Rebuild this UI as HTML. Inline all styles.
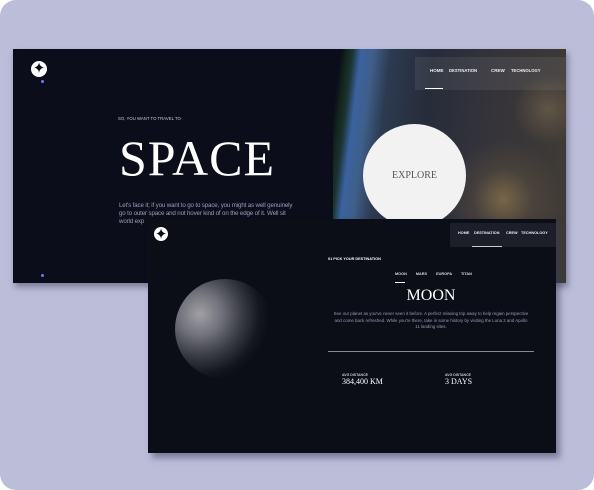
<!DOCTYPE html>
<html><head><style>
*{margin:0;padding:0;box-sizing:border-box}
body{width:594px;height:490px;background:#fff;overflow:hidden;font-family:"Liberation Sans",sans-serif}
.bg{position:absolute;left:0;top:0;width:594px;height:490px;background:#bcbdd9;border-radius:16px}
.s1{position:absolute;left:13px;top:49px;width:553px;height:234px;background:#0b0d1a;overflow:hidden;box-shadow:2px 4px 6px rgba(60,60,90,.5)}
.earth{position:absolute;left:320px;top:0;width:240px;height:234px;
background:
radial-gradient(circle at 170px 150px,rgba(200,160,90,.45) 0,rgba(120,100,70,.25) 30px,transparent 60px),
radial-gradient(circle at 215px 60px,rgba(180,150,100,.3) 0,transparent 35px),
radial-gradient(circle at 120px 200px,rgba(190,150,90,.3) 0,transparent 30px),
linear-gradient(97deg,transparent 0,transparent 8px,#13261c 14px,#1c3432 20px,#3a62a0 28px,#3f5f8a 40px,#2c3a50 58px,#262c3a 100px,#34333a 160px,#3e3a36 240px);}
.nav1{position:absolute;left:402px;top:8px;width:151px;height:33px;background:rgba(255,255,255,.07)}
.nav1 span,.nav2 span{position:absolute;color:#eee;font-size:4.5px;font-weight:bold;white-space:nowrap}
.s2{position:absolute;left:148px;top:219px;width:408px;height:234px;background:#0b0d17;overflow:hidden;box-shadow:4px 5px 6px rgba(60,60,90,.5)}
.nav2{position:absolute;left:302px;top:4px;width:106px;height:24px;background:#1c1f29}
.moon{position:absolute;left:27px;top:60px;width:100px;height:100px;border-radius:50%;
background:radial-gradient(circle at 25% 35%,#a0a0a4 0%,#70717a 22%,#3a3c46 42%,#15171f 60%,#0b0d17 70%)}
.logo{position:absolute;width:16px;height:16px;border-radius:50%;background:#fff}
.logo:after{content:"✦";position:absolute;left:0;top:-2px;width:100%;text-align:center;font-size:15px;color:#0b0d17}
</style></head><body>
<div class="bg"></div>
<div class="s1">
 <div class="earth"></div>
 <div class="logo" style="left:18px;top:12px"></div>
 <div style="position:absolute;left:28px;top:31px;width:3px;height:3px;background:#6d7cf0;border-radius:50%"></div>
 <div style="position:absolute;left:28px;top:225px;width:3px;height:3px;background:#6d7cf0;border-radius:50%"></div>
 <div class="nav1"><span style="left:15px;top:11px">HOME</span><span style="left:34px;top:11px;font-size:4.2px">DESTINATION</span><span style="left:76px;top:11px">CREW</span><span style="left:96px;top:11px;font-size:4.2px">TECHNOLOGY</span><div style="position:absolute;left:10px;top:31px;width:18px;height:1px;background:#fff"></div></div>
 <div style="position:absolute;left:105px;top:67px;color:#c8c9e0;font-size:4.3px">SO, YOU WANT TO TRAVEL TO</div>
 <div style="position:absolute;left:106px;top:80px;color:#fff;font-family:'Liberation Serif',serif;font-size:50px;letter-spacing:1px">SPACE</div>
 <div style="position:absolute;left:106px;top:153px;width:178px;color:#9a9cb8;font-size:6.2px;line-height:8px;letter-spacing:-.15px">Let's face it; if you want to go to space, you might as well genuinely go to outer space and not hover kind of on the edge of it. Well sit<br>world exp</div>
 <div style="position:absolute;left:350px;top:75px;width:103px;height:103px;border-radius:50%;background:#f2f2f2;color:#555;font-family:'Liberation Serif',serif;font-size:10px;line-height:103px;text-align:center">EXPLORE</div>
</div>
<div class="s2">
 <div class="moon"></div>
 <div class="nav2"><span style="left:8px;top:8px;font-size:3.8px">HOME</span><span style="left:24px;top:8px;font-size:3.8px">DESTINATION</span><span style="left:56px;top:8px;font-size:3.8px">CREW</span><span style="left:71px;top:8px;font-size:3.8px">TECHNOLOGY</span><div style="position:absolute;left:22px;top:23px;width:30px;height:1px;background:#ccc"></div></div>
 <div style="position:absolute;left:180px;top:38px;color:#fff;font-size:3.8px;font-weight:bold">01 PICK YOUR DESTINATION</div>
 <div style="position:absolute;left:247px;top:53px;color:#ddd;font-size:3.8px;font-weight:bold;word-spacing:8px">MOON MARS EUROPA TITAN</div>
 <div style="position:absolute;left:247px;top:63px;width:10px;height:1px;background:#fff"></div>
 <div style="position:absolute;left:180px;top:68px;width:206px;text-align:center;color:#fff;font-family:'Liberation Serif',serif;font-size:16px">MOON</div>
 <div style="position:absolute;left:184px;top:92px;width:198px;text-align:center;color:#9a9cb8;font-size:4.4px;line-height:6.5px">See our planet as you've never seen it before. A perfect relaxing trip away to help regain perspective and come back refreshed. While you're there, take in some history by visiting the Luna 2 and Apollo 11 landing sites.</div>
 <div style="position:absolute;left:180px;top:132px;width:206px;height:1px;background:#888"></div>
 <div style="position:absolute;left:194px;top:154px;color:#ccc;font-size:3.5px;font-weight:bold">AVG DISTANCE</div>
 <div style="position:absolute;left:194px;top:158px;color:#fff;font-family:'Liberation Serif',serif;font-size:8px">384,400 KM</div>
 <div style="position:absolute;left:297px;top:154px;color:#ccc;font-size:3.5px;font-weight:bold">AVG DISTANCE</div>
 <div style="position:absolute;left:297px;top:158px;color:#fff;font-family:'Liberation Serif',serif;font-size:8px">3 DAYS</div>
</div>
<div class="logo" style="left:154px;top:227px;width:14px;height:14px"></div>
</body></html>
